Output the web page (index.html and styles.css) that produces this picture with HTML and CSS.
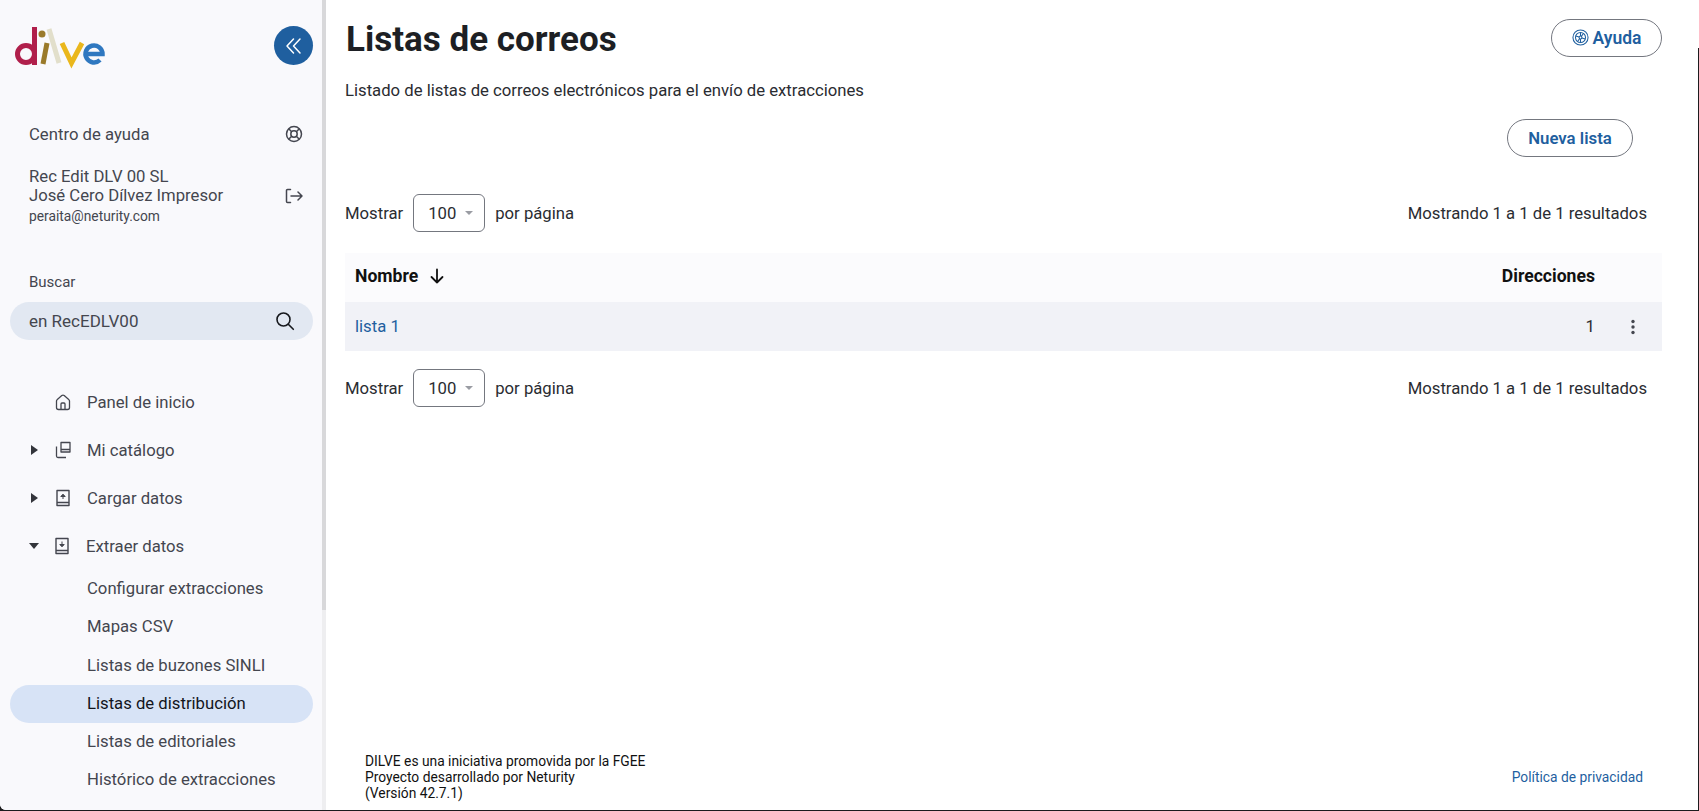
FILE: index.html
```html
<!DOCTYPE html>
<html lang="es">
<head>
  <meta charset="UTF-8">
  <title>Listas de correos</title>
  <link rel="stylesheet" href="styles.css">
</head>
<body>
  <div class="app">
    <aside class="sidebar">
      <div class="brand">
        <svg class="logo" width="100" height="45" viewBox="0 0 100 45" aria-label="dilve" fill="none">
          <circle cx="16" cy="29" r="8.500" stroke="#b01f4b" stroke-width="5"/>
          <path d="M24.500 2v38" stroke="#b01f4b" stroke-width="5"/>
          <circle cx="32" cy="9" r="3.500" fill="#9a7a2a"/>
          <path d="M37 18l-4 21" stroke="#9a7a2a" stroke-width="5"/>
          <path d="M39 4l10 34" stroke="#e2dfcb" stroke-width="5"/>
          <path d="M52 18l9.500 20 10.500-20" stroke="#eab71c" stroke-width="5"/>
          <path d="M75.500 29h17a8.500 8.500 0 1 0-2.500 6" stroke="#2f78c0" stroke-width="4.500"/>
        </svg>
        <button class="collapse" aria-label="Contraer">
          <svg width="20" height="20" viewBox="0 0 20 20" fill="none" stroke="#fff" stroke-width="1.500" stroke-linecap="round" stroke-linejoin="round"><path d="M9.500 3l-6.500 7 6.500 7M16 3l-6.500 7 6.500 7"/></svg>
        </button>
      </div>

      <div class="side-row help-row">
        <span>Centro de ayuda</span>
        <svg width="18" height="18" viewBox="0 0 18 18" fill="none" stroke="#44464f" stroke-width="1.500"><circle cx="9" cy="9" r="7.500"/><circle cx="9" cy="9" r="3.200"/><path d="M3.700 3.700l3 3M14.300 3.700l-3 3M3.700 14.300l3-3M14.300 14.300l-3-3"/></svg>
      </div>

      <div class="side-row user-row">
        <div>
          <div>Rec Edit DLV 00 SL</div>
          <div>José Cero Dílvez Impresor</div>
          <div class="email">peraita@neturity.com</div>
        </div>
        <svg class="logout" width="18" height="16" viewBox="0 0 18 16" fill="none" stroke="#44464f" stroke-width="1.500" stroke-linecap="round" stroke-linejoin="round"><path d="M5.500 1.500h-3a1 1 0 0 0-1 1v11a1 1 0 0 0 1 1h3M6 8h11M13 4l4 4-4 4"/></svg>
      </div>

      <div class="search">
        <label class="search-label">Buscar</label>
        <div class="search-box">
          <span>en RecEDLV00</span>
          <svg width="20" height="20" viewBox="0 0 20 20" fill="none" stroke="#16181d" stroke-width="1.600" stroke-linecap="round"><circle cx="8.500" cy="8.500" r="6.500"/><path d="M13.300 13.300l5 5"/></svg>
        </div>
      </div>

      <nav class="menu">
        <a class="menu-item">
          <span class="caret"></span>
          <svg class="menu-icon" viewBox="0 0 18 18" fill="none" stroke="#44464f" stroke-width="1.300" stroke-linejoin="round"><path d="M2.500 8v6.500a2 2 0 0 0 2 2h9a2 2 0 0 0 2-2V8a2 2 0 0 0-.8-1.600l-4.500-3.800a2 2 0 0 0-2.400 0L3.300 6.400A2 2 0 0 0 2.500 8zM7 16.500V11a1 1 0 0 1 1-1h2a1 1 0 0 1 1 1v5.500"/></svg>
          Panel de inicio
        </a>
        <a class="menu-item">
          <span class="caret right"></span>
          <svg class="menu-icon" viewBox="0 0 18 18" fill="none" stroke="#44464f" stroke-width="1.300" stroke-linejoin="round"><path d="M7 1.500h9v9.500H7zM7 8.500h9M2.500 5.500v9.500a1.500 1.500 0 0 0 1.500 1.500h8"/></svg>
          Mi catálogo
        </a>
        <a class="menu-item">
          <span class="caret right"></span>
          <svg class="menu-icon" viewBox="0 0 18 18" fill="none" stroke="#44464f" stroke-width="1.400" stroke-linejoin="round"><path d="M3 1.500h12v15H3zM3 13.500h12"/><path d="M9 10V5.500M6.800 7.500L9 5.200l2.200 2.300z" fill="#44464f" stroke-width="1"/></svg>
          Cargar datos
        </a>
        <a class="menu-item">
          <span class="caret down"></span>
          <svg class="menu-icon" viewBox="0 0 18 18" fill="none" stroke="#44464f" stroke-width="1.400" stroke-linejoin="round"><path d="M3 1.500h12v15H3zM3 13.500h12"/><path d="M9 4.500V9M6.800 7.500L9 9.800l2.200-2.300z" fill="#44464f" stroke-width="1"/></svg>
          Extraer datos
        </a>
        <ul class="submenu">
          <li>Configurar extracciones</li>
          <li>Mapas CSV</li>
          <li>Listas de buzones SINLI</li>
          <li class="active">Listas de distribución</li>
          <li>Listas de editoriales</li>
          <li>Histórico de extracciones</li>
        </ul>
      </nav>
      <div class="scrollbar"></div>
    </aside>

    <main class="content">
      <header class="page-head">
        <h1>Listas de correos</h1>
        <button class="pill-btn help-btn">
          <svg width="17" height="17" viewBox="0 0 18 18" fill="none" stroke="#1f5f9f" stroke-width="1.100"><circle cx="9" cy="9" r="8"/><circle cx="9" cy="9" r="5.300"/><circle cx="9" cy="9" r="1.500"/><path d="M9 3.700v3.800M9 10.500v3.800M3.900 7.400l3.700 1M10.400 9.500l3.700 1M5.900 13.300l2.200-3.100M9.900 7.800l2.200-3.100"/></svg>
          Ayuda
        </button>
      </header>
      <p class="intro">Listado de listas de correos electrónicos para el envío de extracciones</p>

      <div class="actions">
        <button class="pill-btn new-btn">Nueva lista</button>
      </div>

      <div class="pager pager-top">
        <div class="per-page">
          Mostrar
          <div class="select">100<span class="select-arrow"></span></div>
          por página
        </div>
        <div class="count">Mostrando 1 a 1 de 1 resultados</div>
      </div>

      <table class="lists">
        <thead>
          <tr>
            <th class="col-name">
              <span class="sort">Nombre
                <svg width="16" height="16" viewBox="0 0 16 16" fill="none" stroke="#111" stroke-width="1.800" stroke-linecap="round" stroke-linejoin="round"><path d="M8 1.500v13M2.500 9L8 14.500 13.500 9"/></svg>
              </span>
            </th>
            <th class="col-num">Direcciones</th>
            <th class="col-menu"></th>
          </tr>
        </thead>
        <tbody>
          <tr>
            <td class="col-name"><a class="list-link">lista 1</a></td>
            <td class="col-num">1</td>
            <td class="col-menu">
              <svg width="4" height="16" viewBox="0 0 4 16" fill="#44464f"><circle cx="2" cy="2.500" r="1.700"/><circle cx="2" cy="8" r="1.700"/><circle cx="2" cy="13.500" r="1.700"/></svg>
            </td>
          </tr>
        </tbody>
      </table>

      <div class="pager pager-bottom">
        <div class="per-page">
          Mostrar
          <div class="select">100<span class="select-arrow"></span></div>
          por página
        </div>
        <div class="count">Mostrando 1 a 1 de 1 resultados</div>
      </div>

      <footer class="foot">
        <div>
          DILVE es una iniciativa promovida por la FGEE<br>
          Proyecto desarrollado por Neturity<br>
          (Versión 42.7.1)
        </div>
        <a class="privacy">Política de privacidad</a>
      </footer>
    </main>
  </div>
</body>
</html>
```

FILE: styles.css
```css
* {
  box-sizing: border-box;
}
html, body {
  height: 100%;
  margin: 0;
  overflow: hidden;
}
body {
  font-family: Roboto, "Liberation Sans", sans-serif;
  font-size: 16.700px;
  color: #2a2c31;
  background: #1c1c1e;
}
.app {
  position: relative;
  display: flex;
  width: 1698px;
  height: 810px;
  background: #fff;
  border-bottom-left-radius: 6px;
}
/* the window edge only starts below the top bar */
.app::after {
  content: "";
  position: absolute;
  top: 0;
  right: -1px;
  width: 1px;
  height: 48px;
  background: #fff;
}

/* sidebar */
.sidebar {
  position: relative;
  width: 326px;
  flex-shrink: 0;
  height: 100%;
  padding: 0 13px 0 10px;
  background: #f9f9fc;
  color: #44464f;
  overflow: hidden;
  border-bottom-left-radius: 6px;
}
.scrollbar {
  position: absolute;
  top: 0;
  right: 0;
  width: 4px;
  height: 100%;
  background: #eeeef0;
}
.scrollbar::before {
  content: "";
  display: block;
  height: 610px;
  background: #d8d8da;
}
.brand {
  display: flex;
  justify-content: space-between;
  align-items: flex-start;
  height: 39px;
  margin-top: 26px;
}
.logo {
  margin-top: -1px;
}
.collapse {
  width: 39px;
  height: 39px;
  padding: 0;
  border: none;
  border-radius: 50%;
  background: #1f5f9f;
  display: flex;
  align-items: center;
  justify-content: center;
}
.side-row {
  display: flex;
  justify-content: space-between;
  align-items: center;
  padding: 0 10px 0 19px;
}
.help-row {
  margin-top: 59px;
  height: 20px;
}
.user-row {
  margin-top: 23px;
  line-height: 19px;
}
.logout {
  margin-top: 0;
}
.email {
  font-size: 13.800px;
  line-height: 17px;
  margin-top: 3px;
}
.search {
  margin-top: 47px;
}
.search-label {
  display: block;
  padding-left: 19px;
  font-size: 15px;
  line-height: 20px;
}
.search-box {
  display: flex;
  justify-content: space-between;
  align-items: center;
  height: 38px;
  margin-top: 10px;
  padding: 0 18px 0 19px;
  border-radius: 19px;
  background: #e2e8f2;
  font-size: 17px;
}
.menu {
  margin-top: 38px;
}
.menu-item {
  display: flex;
  align-items: center;
  height: 48px;
  padding-left: 19px;
}
.caret {
  width: 12px;
  margin-right: 13px;
  flex-shrink: 0;
}
.caret.right {
  width: 0;
  height: 0;
  margin-right: 16px;
  margin-left: 2px;
  border-top: 5.500px solid transparent;
  border-bottom: 5.500px solid transparent;
  border-left: 7px solid #33353b;
}
.caret.down {
  width: 0;
  height: 0;
  margin-right: 14px;
  border-left: 5.500px solid transparent;
  border-right: 5.500px solid transparent;
  border-top: 6px solid #33353b;
}
.menu-icon {
  width: 18px;
  height: 18px;
  margin-right: 15px;
  flex-shrink: 0;
}
.submenu {
  list-style: none;
  margin: 0;
  padding: 0;
}
.submenu li {
  height: 38.300px;
  line-height: 38.300px;
  padding-left: 77px;
  border-radius: 20px;
}
.submenu .active {
  background: #d7e3f6;
  color: #12151c;
}

/* main */
.content {
  flex: 1;
  min-width: 0;
  display: flex;
  flex-direction: column;
  padding: 19px 36px 0 19px;
}
.page-head {
  display: flex;
  justify-content: space-between;
  align-items: center;
  height: 37px;
}
h1 {
  margin: 4px 0 0 1px;
  font-size: 35px;
  font-weight: 700;
  line-height: 40px;
  color: #1d1f24;
}
.pill-btn {
  display: flex;
  align-items: center;
  justify-content: center;
  height: 38px;
  padding: 0;
  border: 1px solid #74777f;
  border-radius: 19px;
  background: #fff;
  color: #1f5f9f;
  font-family: inherit;
  font-size: 16.800px;
  font-weight: 600;
}
.help-btn {
  width: 111px;
  gap: 4px;
  font-size: 17.500px;
}
.intro {
  margin: 25px 0 0;
  line-height: 20px;
}
.actions {
  display: flex;
  justify-content: flex-end;
  padding-right: 29px;
  margin-top: 18px;
}
.new-btn {
  width: 126px;
}
.pager {
  display: flex;
  justify-content: space-between;
  align-items: center;
  padding-right: 15px;
}
.pager-top {
  margin-top: 37px;
}
.pager-bottom {
  margin-top: 18px;
}
.per-page {
  display: flex;
  align-items: center;
  gap: 10px;
}
.select {
  display: flex;
  align-items: center;
  width: 72px;
  height: 38px;
  padding-left: 14px;
  border: 1px solid #74777f;
  border-radius: 6px;
}
.select-arrow {
  width: 0;
  height: 0;
  margin-left: 9px;
  border-left: 4px solid transparent;
  border-right: 4px solid transparent;
  border-top: 4px solid #9a9ca3;
}
.lists {
  width: 100%;
  margin-top: 21px;
  border-collapse: collapse;
}
.lists th, .lists td {
  height: 49px;
  padding: 0;
}
.lists thead tr {
  background: #fbfbfd;
}
.lists tbody tr {
  background: #f1f2f7;
}
.lists th {
  padding-bottom: 3px;
  color: #111;
  font-size: 17.600px;
  font-weight: 700;
  text-align: left;
}
.col-name {
  padding-left: 10px !important;
}
.sort {
  display: inline-flex;
  align-items: center;
  gap: 11px;
}
.lists .col-num {
  text-align: right;
  width: 200px;
}
.col-menu {
  width: 67px;
  padding-left: 36px !important;
}
.col-menu svg {
  display: block;
}
.list-link {
  color: #1f5f9f;
}
.foot {
  margin-top: auto;
  display: flex;
  justify-content: space-between;
  align-items: center;
  padding: 0 19px 9px 20px;
  font-size: 13.800px;
  line-height: 16px;
  color: #111;
}
.privacy {
  color: #1f5f9f;
}
```
